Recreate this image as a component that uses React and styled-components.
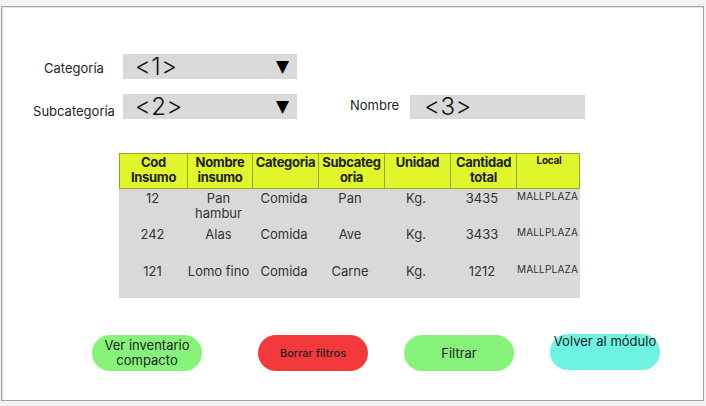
import React from "react";
import styled, { createGlobalStyle } from "styled-components";

const GlobalStyle = createGlobalStyle`
  html, body {
    margin: 0;
    padding: 0;
    background: #f3f3f3;
    font-family: Inter, "Liberation Sans", sans-serif;
    color: #1e1e1e;
  }
`;

const columns = [
  { key: "cod", title: ["Cod", "Insumo"] },
  { key: "nombre", title: ["Nombre", "insumo"] },
  { key: "cat", title: ["Categoria"] },
  { key: "sub", title: ["Subcateg", "oria"] },
  { key: "unidad", title: ["Unidad"] },
  { key: "cant", title: ["Cantidad", "total"] },
  { key: "local", title: ["Local"], small: true },
];

const rows = [
  { cod: "12", nombre: "Pan hambur", cat: "Comida", sub: "Pan", unidad: "Kg.", cant: "3435", local: "MALLPLAZA", h: 36 },
  { cod: "242", nombre: "Alas", cat: "Comida", sub: "Ave", unidad: "Kg.", cant: "3433", local: "MALLPLAZA", h: 37 },
  { cod: "121", nombre: "Lomo fino", cat: "Comida", sub: "Carne", unidad: "Kg.", cant: "1212", local: "MALLPLAZA", h: 36 },
];

const App = () => {
  return (
    <>
      <GlobalStyle />
      <Frame>
        <Filters>
          <FilterRow>
            <Label>Categoría</Label>
            <Select>
              <Value>&lt;1&gt;</Value>
              <Arrow>▼</Arrow>
            </Select>
          </FilterRow>
          <FilterRow>
            <Label low>Subcategoría</Label>
            <Select>
              <Value>&lt;2&gt;</Value>
              <Arrow>▼</Arrow>
            </Select>
            <NameLabel>Nombre</NameLabel>
            <Input>
              <Value>&lt;3&gt;</Value>
            </Input>
          </FilterRow>
        </Filters>

        <Table>
          <HeadRow>
            {columns.map((c) => (
              <HeadCell key={c.key} small={c.small}>
                {c.title.map((t) => (
                  <span key={t}>{t}</span>
                ))}
              </HeadCell>
            ))}
          </HeadRow>
          <Body>
            {rows.map((r, i) => (
              <BodyRow key={i} style={{ height: r.h }}>
                {columns.map((c) => (
                  <Cell key={c.key} small={c.small}>
                    {r[c.key]}
                  </Cell>
                ))}
              </BodyRow>
            ))}
          </Body>
        </Table>

        <Actions>
          <Pill color="#86f27a" offset={0}>Ver inventario compacto</Pill>
          <Pill color="#f4393c" offset={56} small>Borrar filtros</Pill>
          <Pill color="#86f27a" offset={36}>Filtrar</Pill>
          <Pill color="#6ef2e2" offset={36} top>Volver al módulo</Pill>
        </Actions>
      </Frame>
    </>
  );
};

export default App;

const Frame = styled.div`
  box-sizing: border-box;
  margin: 6px 0 0 1px;
  width: 703px;
  height: 395px;
  background: #fff;
  border: 1px solid #a4a4a4;
  box-shadow: inset 1px 1px 0 #e2e2e2;
  padding-top: 47px;
`;

const Filters = styled.div`
  display: flex;
  flex-direction: column;
  gap: 15px;
`;

const FilterRow = styled.div`
  display: flex;
  align-items: center;
  height: 25px;
`;

const Label = styled.div`
  width: 84px;
  margin-left: 30px;
  margin-right: 7px;
  text-align: center;
  font-size: 13px;
  position: relative;
  top: ${(p) => (p.low ? "4px" : "1px")};
`;

const NameLabel = styled.div`
  margin-left: 53px;
  margin-right: 11px;
  font-size: 13px;
  position: relative;
  top: -2px;
`;

const Select = styled.div`
  box-sizing: border-box;
  width: 174px;
  height: 25px;
  background: #d9d9d9;
  display: flex;
  align-items: center;
  justify-content: space-between;
  padding: 0 8px 0 12px;
`;

const Input = styled(Select)`
  width: 175px;
  height: 24px;
  padding-left: 14px;
`;

const Value = styled.span`
  font-size: 24px;
  font-weight: 300;
  letter-spacing: 0.5px;
  color: #111;
  line-height: 1;
`;

const Arrow = styled.span`
  font-family: "DejaVu Sans", sans-serif;
  font-size: 17px;
  color: #000;
  line-height: 1;
`;

const Table = styled.div`
  margin: 34px 0 0 117px;
  width: 461px;
`;

const HeadRow = styled.div`
  display: grid;
  grid-template-columns: 67px 65px 66px 66px 66px 66px 65px;
  height: 36px;
  background: #e0f52a;
  border: 1px solid #97a716;
  box-sizing: border-box;
`;

const HeadCell = styled.div`
  display: flex;
  flex-direction: column;
  align-items: center;
  font-weight: 700;
  font-size: ${(p) => (p.small ? "10px" : "13px")};
  line-height: ${(p) => (p.small ? "13px" : "15px")};
  padding-top: ${(p) => (p.small ? "0" : "1px")};
  border-left: 1px solid #97a716;
  letter-spacing: -0.3px;
  white-space: nowrap;
  overflow: hidden;

  &:first-child {
    border-left: none;
  }
`;

const Body = styled.div`
  background: #d9d9d9;
  height: 109px;
`;

const BodyRow = styled.div`
  display: grid;
  grid-template-columns: 67px 65px 66px 66px 66px 66px 65px;
`;

const Cell = styled.div`
  text-align: center;
  font-size: ${(p) => (p.small ? "10px" : "13px")};
  line-height: ${(p) => (p.small ? "13px" : "15px")};
  padding-top: ${(p) => (p.small ? "1px" : "2px")};
  color: #333;
  letter-spacing: ${(p) => (p.small ? "0.2px" : "0")};
  white-space: ${(p) => (p.small ? "nowrap" : "normal")};
`;

const Actions = styled.div`
  display: flex;
  margin: 37px 0 0 90px;
`;

const Pill = styled.div`
  box-sizing: border-box;
  width: 110px;
  height: 36px;
  margin-left: ${(p) => p.offset}px;
  border-radius: 18px;
  background: ${(p) => p.color};
  display: flex;
  align-items: ${(p) => (p.top ? "flex-start" : "center")};
  justify-content: center;
  text-align: center;
  font-size: ${(p) => (p.small ? "11px" : "13px")};
  font-weight: ${(p) => (p.small ? 500 : 400)};
  line-height: 15px;
  color: #1e1e1e;
  padding: 0 8px;
  white-space: ${(p) => (p.top ? "nowrap" : "normal")};
  margin-top: ${(p) => (p.top ? "-1px" : "0")};
`;
